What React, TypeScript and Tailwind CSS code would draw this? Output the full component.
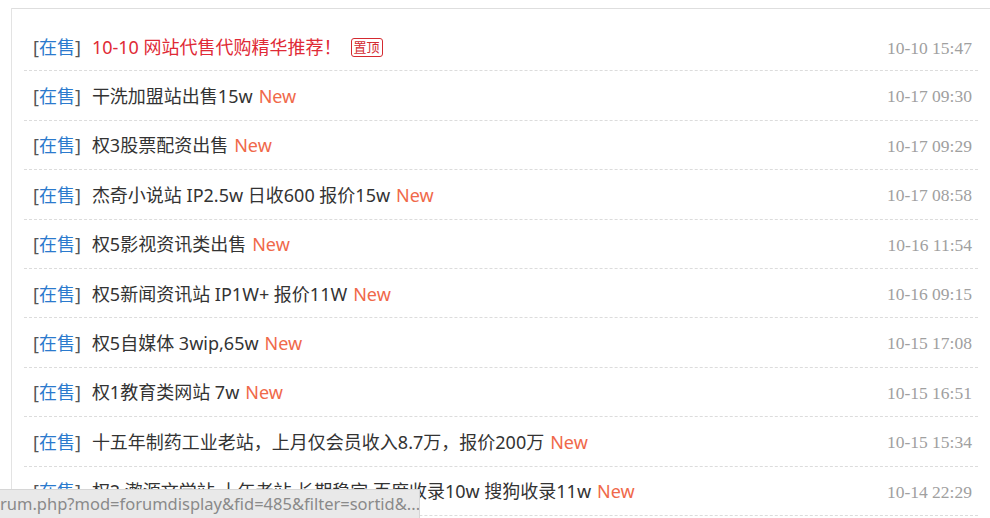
const rows = [
  { title: '干洗加盟站出售15w', date: '10-17 09:30' },
  { title: '权3股票配资出售', date: '10-17 09:29' },
  { title: '杰奇小说站 IP2.5w 日收600 报价15w', date: '10-17 08:58' },
  { title: '权5影视资讯类出售', date: '10-16 11:54' },
  { title: '权5新闻资讯站 IP1W+ 报价11W', date: '10-16 09:15' },
  { title: '权5自媒体 3wip,65w', date: '10-15 17:08' },
  { title: '权1教育类网站 7w', date: '10-15 16:51' },
  { title: '十五年制药工业老站，上月仅会员收入8.7万，报价200万', date: '10-15 15:34' },
  { title: '权2 漱源文学站 十年老站 长期稳定 百度收录10w 搜狗收录11w', date: '10-14 22:29' },
]

function Tag() {
  return (
    <span className="text-[#555]">
      [<span className="text-[#2b7acd]">在售</span>]
    </span>
  )
}

export default function App() {
  return (
    <div className="relative h-[518px] w-[990px] overflow-hidden bg-white font-['Noto_Sans','Noto_Sans_CJK_SC',sans-serif]">
      <div className="ml-[11px] h-full border-l border-[#e3e3e3]">
        <div className="mt-[8px] border-t border-[#dedede] px-[12px] pt-[14px]">
          {/* pinned */}
          <div className="flex h-[48.4px] items-center border-b border-dashed border-[#dcdcdc] pt-[2px] pl-[9px] pr-[6px] text-[18px]">
            <Tag />
            <span className="ml-[11px] text-[#df2a36]">10-10 网站代售代购精华推荐！</span>
            <span className="ml-[9px] flex h-[19px] items-center rounded-[3px] border border-[#d42a30] px-[2px] text-[13px] leading-none text-[#d42a30]">
              置顶
            </span>
            <span className="ml-auto font-['Liberation_Serif',serif] text-[17.5px] text-[#a0a0a0]">10-10 15:47</span>
          </div>

          {rows.map((r) => (
            <div
              key={r.date}
              className="flex h-[49.4px] items-center border-b border-dashed border-[#dcdcdc] pt-[2px] pl-[9px] pr-[6px] text-[18px]"
            >
              <Tag />
              <span className="ml-[11px] whitespace-nowrap text-[#333]">{r.title}</span>
              <span className="ml-[6px] text-[#f0694a]">New</span>
              <span className="ml-auto font-['Liberation_Serif',serif] text-[17.5px] text-[#a0a0a0]">{r.date}</span>
            </div>
          ))}
        </div>
      </div>

      {/* browser status bar */}
      <div className="absolute bottom-0 left-0 flex h-[29px] w-[420px] items-center overflow-hidden border-t border-r border-[#d6d6d6] bg-[#e9e9e9] text-[16.5px] whitespace-nowrap text-[#8a8a8a]">
        rum.php?mod=forumdisplay&amp;fid=485&amp;filter=sortid&amp;...
      </div>
    </div>
  )
}
